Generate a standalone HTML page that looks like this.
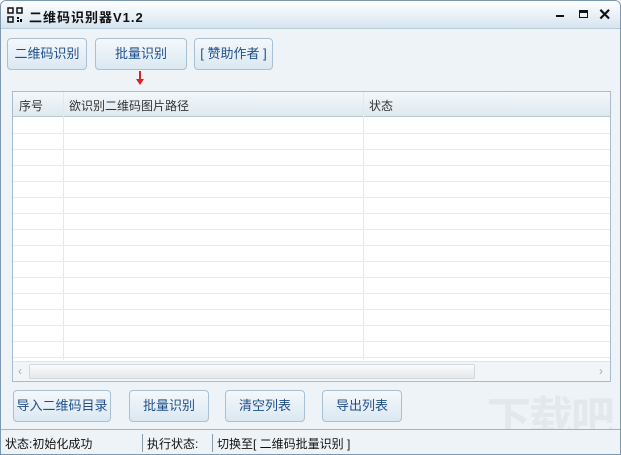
<!DOCTYPE html>
<html><head><meta charset="utf-8"><style>
*{margin:0;padding:0;box-sizing:border-box}
body{width:621px;height:455px;overflow:hidden;background:#fff;font-family:"Liberation Sans","Noto Sans CJK SC",sans-serif;font-size:12px;color:#222}
.win{position:absolute;left:0;top:0;width:621px;height:455px;border:1px solid #7d98ae;border-radius:6px 6px 0 0;background:#eef3f7;overflow:hidden}
.title{position:absolute;left:0;top:0;width:100%;height:28px;background:linear-gradient(#ffffff,#e6eff6 60%,#d6e4ef);border-bottom:1px solid #b8cbd9}
.title .t{position:absolute;left:28px;top:6px;font-weight:bold;font-size:13px;color:#111;letter-spacing:1px}
.btn{position:absolute;height:32px;border:1px solid #a9c0d2;border-radius:4px;background:linear-gradient(#f4f8fb,#dbe8f2);color:#1f4f8a;font-size:13px;text-align:center;line-height:30px;white-space:nowrap}
.tbl{position:absolute;left:11px;top:90px;width:599px;height:291px;border:1px solid #a8bccb;background:#fff}
.hdr{position:absolute;left:0;top:0;width:100%;height:25px;background:linear-gradient(#f3f7fa,#dfe9f0);border-bottom:1px solid #b8c9d6}
.hdr span{position:absolute;top:5px;font-size:12px;color:#333}
.row{position:absolute;left:0;width:597px;height:1px;background:#e6edf2}
.col{position:absolute;top:0;width:1px;height:268px;background:#e2e9ee}
.sb{position:absolute;left:0;top:269px;width:597px;height:20px;background:#f2f5f7;border-top:1px solid #dde5eb}
.status{position:absolute;left:0;top:428px;width:100%;height:26px;border-top:1px solid #9fb4c4;background:#eef3f7;font-size:12px;color:#111}
.status span{position:absolute;top:5px;white-space:nowrap}
.sep{position:absolute;top:4px;width:1px;height:18px;background:#8a9aa8}
</style></head><body>
<div class="win">
<div class="title">
<svg style="position:absolute;left:6px;top:6px" width="16" height="16" viewBox="0 0 16 16"><g fill="none" stroke="#111" stroke-width="1.5"><rect x="1" y="1" width="5" height="5"/><rect x="10" y="1" width="5" height="5"/><rect x="1" y="10" width="5" height="5"/></g><rect x="10" y="10" width="2" height="2"/><rect x="13" y="12" width="2" height="3"/><rect x="10" y="13" width="2" height="2"/></svg>
<div class="t">二维码识别器V1.2</div>
<div style="position:absolute;left:555px;top:14px;width:8px;height:2px;background:#111"></div>
<div style="position:absolute;left:578px;top:9px;width:9px;height:8px;border:1.5px solid #111;border-top-width:3px"></div>
<div style="position:absolute;left:597px;top:4px;font-size:16px;font-weight:bold;color:#111">✕</div>
</div>
<div class="btn" style="left:6px;top:37px;width:80px">二维码识别</div>
<div class="btn" style="left:94px;top:37px;width:92px">批量识别</div>
<div class="btn" style="left:193px;top:37px;width:79px">[ 赞助作者 ]</div>
<div style="position:absolute;left:138px;top:70px;width:2px;height:10px;background:#d22"></div>
<div style="position:absolute;left:135px;top:78px;width:0;height:0;border-left:4px solid transparent;border-right:4px solid transparent;border-top:6px solid #d22"></div>
<div class="tbl">
<div class="hdr"><span style="left:6px">序号</span><span style="left:56px">欲识别二维码图片路径</span><span style="left:356px">状态</span>
<div style="position:absolute;left:50px;top:0;width:1px;height:25px;background:#b8c9d6"></div>
<div style="position:absolute;left:350px;top:0;width:1px;height:25px;background:#b8c9d6"></div></div>
<div class="col" style="left:50px"></div><div class="col" style="left:350px"></div>
<div class="row" style="top:41px"></div><div class="row" style="top:57px"></div><div class="row" style="top:73px"></div><div class="row" style="top:89px"></div><div class="row" style="top:105px"></div><div class="row" style="top:121px"></div><div class="row" style="top:137px"></div><div class="row" style="top:153px"></div><div class="row" style="top:169px"></div><div class="row" style="top:185px"></div><div class="row" style="top:201px"></div><div class="row" style="top:217px"></div><div class="row" style="top:233px"></div><div class="row" style="top:249px"></div><div class="row" style="top:265px"></div>
<div class="sb"><span style="position:absolute;left:5px;top:2px;color:#aaa">‹</span>
<div style="position:absolute;left:16px;top:2px;width:446px;height:15px;border:1px solid #d0d8de;border-radius:2px;background:linear-gradient(#fafbfc,#e4e9ed)"></div>
<span style="position:absolute;left:586px;top:2px;color:#aaa">›</span></div>
</div>
<div class="btn" style="left:12px;top:389px;width:98px">导入二维码目录</div>
<div class="btn" style="left:128px;top:389px;width:80px">批量识别</div>
<div class="btn" style="left:224px;top:389px;width:80px">清空列表</div>
<div class="btn" style="left:321px;top:389px;width:80px">导出列表</div>
<div style="position:absolute;left:486px;top:390px;height:60px;overflow:hidden;white-space:nowrap;font-size:44px;line-height:56px;color:#e3e8ec;font-weight:bold;letter-spacing:-2px">下载吧</div>
<div class="status"><span style="left:4px">状态:初始化成功</span><div class="sep" style="left:141px"></div><span style="left:146px">执行状态:</span><div class="sep" style="left:211px"></div><span style="left:216px">切换至[ 二维码批量识别 ]</span></div>
</div>
</body></html>
